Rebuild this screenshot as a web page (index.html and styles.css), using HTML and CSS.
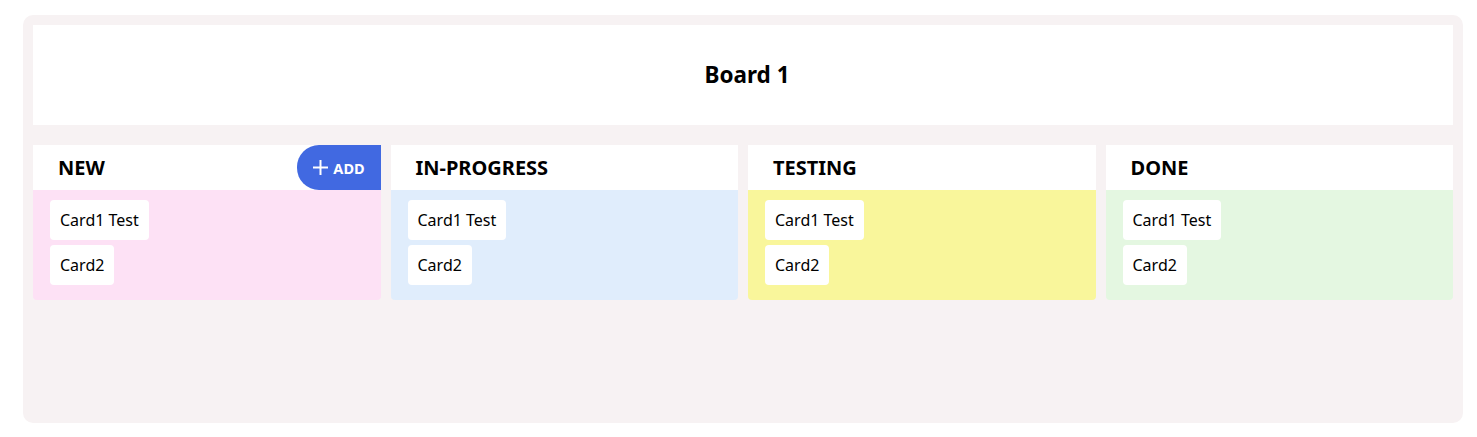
FILE: index.html
```html
<!DOCTYPE html>
<html lang="en">
<head>
    <meta charset="UTF-8">
    <meta name="viewport" content="width=device-width, initial-scale=1.0">
    <title>Board 1</title>
    <link rel="stylesheet" href="styles.css">
</head>
<body>
<div class="board">
    <div class="board-header">
        <h1>Board 1</h1>
    </div>
    <div class="lanes">
        <div class="lane lane-new">
            <div class="lane-header">
                <h2>NEW</h2>
                <button class="add-btn">
                    <svg width="17" height="17" viewBox="0 0 17 17"><path d="M8.5 1v15M1 8.5h15" stroke="#fff" stroke-width="2" fill="none"/></svg>
                    ADD
                </button>
            </div>
            <div class="lane-body">
                <div class="card">Card1 Test</div>
                <div class="card">Card2</div>
            </div>
        </div>
        <div class="lane lane-progress">
            <div class="lane-header"><h2>IN-PROGRESS</h2></div>
            <div class="lane-body">
                <div class="card">Card1 Test</div>
                <div class="card">Card2</div>
            </div>
        </div>
        <div class="lane lane-testing">
            <div class="lane-header"><h2>TESTING</h2></div>
            <div class="lane-body">
                <div class="card">Card1 Test</div>
                <div class="card">Card2</div>
            </div>
        </div>
        <div class="lane lane-done">
            <div class="lane-header"><h2>DONE</h2></div>
            <div class="lane-body">
                <div class="card">Card1 Test</div>
                <div class="card">Card2</div>
            </div>
        </div>
    </div>
</div>
</body>
</html>
```

FILE: styles.css
```css
body, html {
    margin: 0;
    padding: 0;
    background: #ffffff;
    font-family: 'Noto Sans', 'Open Sans', sans-serif;
    color: #000;
}
body {
    padding: 15px 14px 14px 23px;
}
.board {
    background: #f7f2f3;
    border-radius: 10px;
    padding: 10px;
    height: 408px;
    box-sizing: border-box;
}
.board-header {
    background: #ffffff;
    height: 100px;
    display: flex;
    justify-content: center;
    align-items: center;
}
h1 {
    margin: 0 0 2px 8px;
    font-size: 22.5px;
    font-weight: bold;
}
.lanes {
    margin-top: 20px;
    display: grid;
    grid-template-columns: repeat(4, 1fr);
    gap: 10px;
}
.lane {
    border-radius: 0 0 4px 4px;
    overflow: hidden;
}
.lane-header {
    background: #ffffff;
    height: 45px;
    display: flex;
    align-items: center;
    justify-content: space-between;
    padding-left: 25px;
}
h2 {
    margin: 0 0 1px;
    font-size: 20px;
    font-weight: bold;
}
.add-btn {
    height: 45px;
    width: 84px;
    border: none;
    border-radius: 22px 0 0 22px;
    background: #4169e1;
    color: #fff;
    font-family: inherit;
    font-size: 14.5px;
    font-weight: bold;
    display: flex;
    align-items: center;
    justify-content: center;
    gap: 4px;
    padding: 0;
    cursor: pointer;
}
.lane-body {
    padding: 10px 17px 15px;
    display: flex;
    flex-direction: column;
    align-items: flex-start;
    gap: 5px;
}
.lane-new .lane-body { background: #fde1f5; }
.lane-progress .lane-body { background: #e0edfc; }
.lane-testing .lane-body { background: #f9f69b; }
.lane-done .lane-body { background: #e4f7e1; }
.card {
    background: #ffffff;
    border-radius: 4px;
    height: 40px;
    padding: 0 10px;
    display: flex;
    align-items: center;
    font-size: 16px;
}
```
